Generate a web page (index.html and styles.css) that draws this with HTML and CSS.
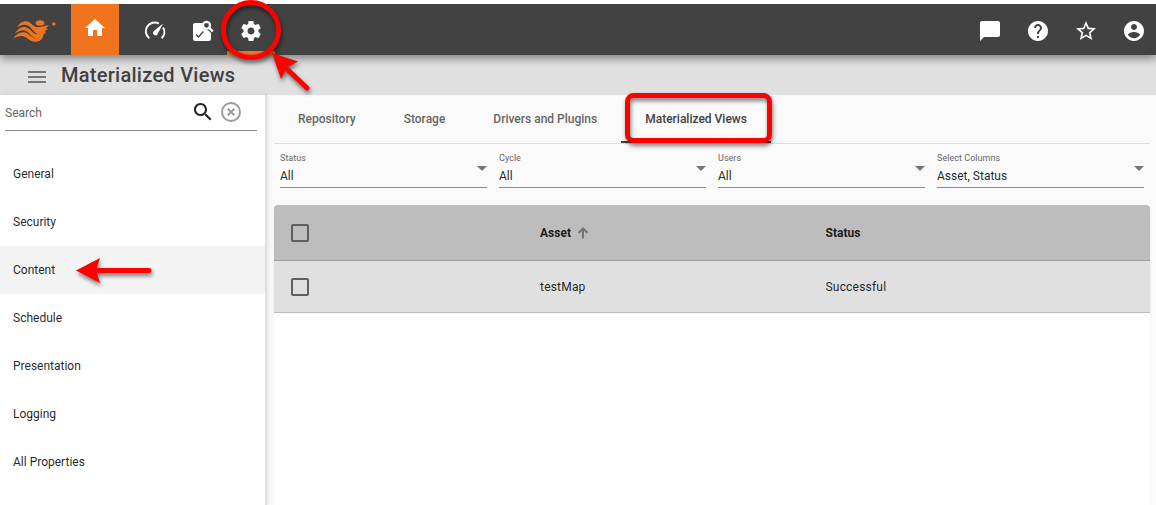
FILE: index.html
```html
<!DOCTYPE html>
<html lang="en">
<head>
<meta charset="utf-8">
<title>Materialized Views</title>
<link rel="stylesheet" href="styles.css">
</head>
<body>
<header class="topbar">
  <div class="logo">
    <svg width="44" height="24" viewBox="0 0 44 24" fill="#f0731e">
      <ellipse cx="27" cy="3.900" rx="4.400" ry="2.600"/>
      <circle cx="40.800" cy="5" r="1.800"/>
      <path d="M4 8.500C6 5 8.500 2.300 13 2.300C18.500 2.500 19.500 8 24 8C29 8.300 31 6.500 36.500 6.300L32.500 9.200L35 9.700L31.500 12.500L33 13.300L30.500 15.500C30 20 27 22.800 22 22.800C16 22.500 14 17.500 9.500 17C6 16.700 3 18 0 19.500C3 16 6 13.200 10.500 13.200C16 13.500 18.500 19.500 23.500 19.500C17.500 17.500 16.500 12.400 11.500 11.400C8 11 5 12.500 2 14.500C4.500 10.500 7 8 11.500 8C17 8.300 19 15 25 15.500C19.500 12.500 18 7 13 5.800C9.500 5.200 6.500 6.500 4 8.500Z"/>
    </svg>
  </div>
  <a class="nav home"><svg class="icon" viewBox="0 0 24 24"><path d="M10 20v-6h4v6h5v-8h3L12 3 2 12h3v8z"/></svg></a>
  <nav class="tools">
    <a class="nav"><svg class="icon" viewBox="0 0 24 24"><path d="M6.300 19.300A8.800 8.800 0 0 1 15.900 4.600M20.100 8.500A8.800 8.800 0 0 1 18.700 19.300" class="arc"/><path d="M20 4.600L10.600 12.200a2.500 2.500 0 1 0 3.800 3.300z"/></svg></a>
    <a class="nav"><svg class="icon" viewBox="0 0 24 24"><path d="M4 4h7.500a5.200 5.200 0 0 0 5.700 7.200L20 14v6a2 2 0 0 1-2 2H4a2 2 0 0 1-2-2V6c0-1.100.9-2 2-2z"/><circle cx="15.500" cy="6.300" r="3.500" fill="none" stroke="#fff" stroke-width="2.200"/><path d="M18 8.700l3.800 3.800" stroke="#fff" stroke-width="2.400"/><path d="M5 15.500l2.400 2.500 5-5.500" fill="none" stroke="#424242" stroke-width="1.300"/></svg></a>
    <a class="nav active"><svg class="icon" viewBox="0 0 24 24"><path d="M19.430 12.980c.04-.32.07-.64.07-.98s-.03-.66-.07-.98l2.110-1.650c.19-.15.24-.42.12-.64l-2-3.460c-.12-.22-.39-.3-.61-.22l-2.490 1c-.52-.4-1.080-.73-1.690-.98l-.38-2.650C14.460 2.180 14.250 2 14 2h-4c-.25 0-.46.18-.49.42l-.38 2.650c-.61.25-1.170.59-1.690.98l-2.490-1c-.23-.09-.49 0-.61.22l-2 3.460c-.13.22-.07.49.12.64l2.110 1.650c-.04.32-.07.65-.07.98s.03.66.07.98l-2.110 1.650c-.19.15-.24.42-.12.64l2 3.460c.12.22.39.3.61.22l2.490-1c.52.4 1.080.73 1.690.98l.38 2.650c.03.24.24.42.49.42h4c.25 0 .46-.18.49-.42l.38-2.650c.61-.25 1.170-.59 1.690-.98l2.490 1c.23.09.49 0 .61-.22l2-3.460c.12-.22.07-.49-.12-.64l-2.110-1.650zM12 15.500c-1.930 0-3.500-1.570-3.500-3.500s1.570-3.500 3.500-3.500 3.500 1.570 3.500 3.500-1.570 3.500-3.500 3.500z"/></svg></a>
  </nav>
  <div class="tools right">
    <a class="nav"><svg class="icon" viewBox="0 0 24 24"><path d="M20 2H4c-1.100 0-2 .9-2 2v18l4-4h14c1.100 0 2-.9 2-2V4c0-1.100-.9-2-2-2z"/></svg></a>
    <a class="nav"><svg class="icon" viewBox="0 0 24 24"><path d="M12 2C6.480 2 2 6.480 2 12s4.480 10 10 10 10-4.480 10-10S17.520 2 12 2zm1 17h-2v-2h2v2zm2.070-7.750l-.9.920C13.450 12.900 13 13.500 13 15h-2v-.5c0-1.100.45-2.100 1.170-2.830l1.240-1.260c.37-.36.590-.86.590-1.410 0-1.100-.9-2-2-2s-2 .9-2 2H8c0-2.210 1.790-4 4-4s4 1.790 4 4c0 .88-.36 1.680-.93 2.250z"/></svg></a>
    <a class="nav"><svg class="icon" viewBox="0 0 24 24"><path d="M22 9.240l-7.190-.62L12 2 9.190 8.630 2 9.240l5.460 4.730L5.820 21 12 17.270 18.180 21l-1.630-7.030L22 9.240zM12 15.400l-3.760 2.270 1-4.280-3.320-2.880 4.380-.38L12 6.100l1.710 4.040 4.380.38-3.320 2.880 1 4.280L12 15.400z"/></svg></a>
    <a class="nav"><svg class="icon" viewBox="0 0 24 24"><path d="M12 2C6.480 2 2 6.480 2 12s4.480 10 10 10 10-4.480 10-10S17.520 2 12 2zm0 3c1.660 0 3 1.340 3 3s-1.340 3-3 3-3-1.340-3-3 1.340-3 3-3zm0 14.200c-2.500 0-4.710-1.280-6-3.220.03-1.990 4-3.080 6-3.080 1.990 0 5.970 1.090 6 3.080-1.290 1.940-3.500 3.220-6 3.220z"/></svg></a>
  </div>
</header>
<div class="titlebar">
  <div class="menu"><i></i><i></i><i></i></div>
  <h1>Materialized Views</h1>
</div>
<div class="body">
  <aside class="sidebar">
    <div class="search">
      <span>Search</span>
      <svg class="magnify" viewBox="0 0 24 24"><path d="M15.500 14h-.79l-.28-.27C15.410 12.590 16 11.110 16 9.500 16 5.910 13.090 3 9.500 3S3 5.910 3 9.500 5.910 16 9.500 16c1.610 0 3.090-.59 4.230-1.570l.27.28v.79l5 4.990L20.490 19l-4.990-5zm-6 0C7.010 14 5 11.990 5 9.500S7.010 5 9.500 5 14 7.010 14 9.500 11.990 14 9.500 14z"/></svg>
      <svg class="clear" viewBox="0 0 22 22"><circle cx="11" cy="11" r="9"/><path d="M7.700 7.700l6.600 6.600M14.300 7.700l-6.600 6.600"/></svg>
    </div>
    <a class="item">General</a>
    <a class="item">Security</a>
    <a class="item selected">Content</a>
    <a class="item">Schedule</a>
    <a class="item">Presentation</a>
    <a class="item">Logging</a>
    <a class="item">All Properties</a>
  </aside>
  <main class="content">
    <div class="tabs">
      <a class="tab">Repository</a>
      <a class="tab">Storage</a>
      <a class="tab">Drivers and Plugins</a>
      <a class="tab current">Materialized Views</a>
    </div>
    <div class="filters">
      <div class="field"><label>Status</label><div class="value">All<b></b></div></div>
      <div class="field"><label>Cycle</label><div class="value">All<b></b></div></div>
      <div class="field"><label>Users</label><div class="value">All<b></b></div></div>
      <div class="field"><label>Select Columns</label><div class="value">Asset, Status<b></b></div></div>
    </div>
    <div class="table">
      <div class="row head">
        <span class="check"></span>
        <span>Asset <svg class="sort" viewBox="0 0 12 12"><path d="M6 11.500V2M1.500 6L6 1.500 10.500 6"/></svg></span>
        <span>Status</span>
      </div>
      <div class="row">
        <span class="check"></span>
        <span>testMap</span>
        <span>Successful</span>
      </div>
    </div>
  </main>
</div>
<svg class="marks" viewBox="0 0 1156 505">
  <g fill="none" stroke="#f00" stroke-width="5">
    <circle cx="251" cy="30" r="27.500"/>
    <rect x="627.500" y="95.500" width="142" height="45" rx="6"/>
    <path d="M287 69L307 88M95 270.500H149" stroke-linecap="round"/>
  </g>
  <path d="M272 53L298 61.500 287.500 67 281 79zM76 270.500L100 258 96 270.500 100 283z" fill="#f00"/>
</svg>
</body>
</html>
```
FILE: styles.css
```css
* { box-sizing: border-box; }
body {
  margin: 0;
  height: 505px;
  padding-top: 4px;
  display: flex;
  flex-direction: column;
  overflow: hidden;
  background: #fff;
  font: 12px/16px Roboto, "Liberation Sans", sans-serif;
  color: rgba(0, 0, 0, .87);
}
.topbar {
  height: 51px;
  flex: none;
  display: flex;
  background: #424242;
  box-shadow: 0 4px 8px rgba(0, 0, 0, .4);
  clip-path: inset(0 0 -20px 0);
  position: relative;
  z-index: 1;
}
.logo { width: 71px; padding: 15px 0 0 13px; }
.nav { width: 48px; height: 51px; padding: 15px 12px 0; }
.icon { display: block; width: 24px; height: 24px; fill: #fff; }
.home { background: #f0731e; padding-top: 12px; }
.tools { display: flex; margin-left: 12px; }
.right { margin: 0 -2px 0 auto; }
.active { border-bottom: 4px solid #f0731e; }
.arc { fill: none; stroke: #fff; stroke-width: 2; }
.titlebar {
  height: 40px;
  flex: none;
  display: flex;
  align-items: center;
  padding-left: 28px;
  background: #e0e0e0;
}
.menu { width: 33px; display: grid; gap: 3px; padding-top: 4px; }
.menu i { width: 18px; height: 2px; background: #757575; }
h1 { margin: 0; font-size: 20px; line-height: 24px; font-weight: 500; color: #424242; letter-spacing: .27px; }
.body { flex: 1; display: flex; min-height: 0; background: #fafafa; }
.sidebar {
  width: 267px;
  flex: none;
  background: #fff;
  border-right: 2px solid #e0e0e0;
  box-shadow: 1px 0 5px rgba(0, 0, 0, .09);
}
.search {
  height: 36px;
  margin: 0 8px 19px 5px;
  display: flex;
  align-items: center;
  border-bottom: 1px solid #8c8c8c;
  color: #666;
}
.search span { width: 186px; }
.magnify { width: 24px; height: 24px; margin-top: -2px; fill: #212121; }
.clear { width: 22px; height: 22px; margin: -2px 0 0 5px; fill: none; stroke: #9b9b9b; stroke-width: 2; }
.item { height: 48px; display: flex; align-items: center; padding-left: 13px; }
.selected { background: #f4f4f4; }
.content { flex: 1; display: flex; flex-direction: column; padding: 0 6px 0 7px; }
.tabs { height: 49px; display: flex; border-bottom: 1px solid #dcdcdc; }
.tab { height: 48px; padding: 0 24px; line-height: 48px; font-weight: 500; color: #666; }
.current { color: #424242; border-bottom: 2px solid #424242; }
.filters { height: 61px; display: flex; gap: 12px; padding: 8px 6px 0; }
.field { flex: 1; }
label { display: block; font-size: 9px; line-height: 12px; letter-spacing: .04px; color: #666; }
.value { height: 24px; padding-top: 4px; display: flex; justify-content: space-between; border-bottom: 1px solid #8c8c8c; }
.value b { width: 10px; height: 5px; margin-top: -2px; background: #757575; clip-path: polygon(0 0, 100% 0, 50% 100%); }
.table { flex: 1; background: #fff; border-radius: 4px 4px 0 0; overflow: hidden; box-shadow: 0 0 2px rgba(0, 0, 0, .08); }
.row {
  height: 52px;
  display: grid;
  grid-template-columns: 249px 285.500px 1fr;
  align-items: center;
  padding-left: 17px;
  background: #e0e0e0;
  border-bottom: 1px solid #bdbdbd;
  letter-spacing: .2px;
}
.head { height: 56px; background: #bdbdbd; border-color: #9e9e9e; font-weight: 700; letter-spacing: .02px; }
.check { width: 18px; height: 18px; border: 2px solid #5f5f5f; border-radius: 2px; }
.sort { width: 12px; height: 12px; margin-left: 3px; vertical-align: -2px; fill: none; stroke: #757575; stroke-width: 2; }
.marks {
  position: absolute;
  z-index: 2;
  left: 0;
  top: 0;
  width: 1156px;
  height: 505px;
  pointer-events: none;
  filter: drop-shadow(1px 3px 2px rgba(0, 0, 0, .5));
}
```
